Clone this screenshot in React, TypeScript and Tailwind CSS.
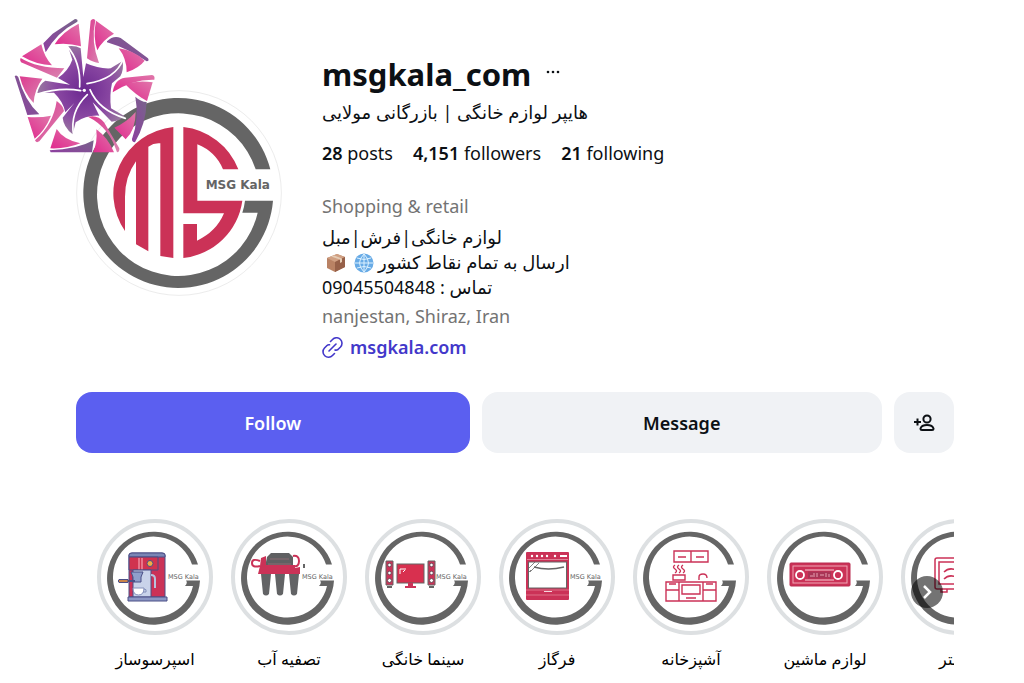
import type { ReactNode } from "react";

const RED = "#cb3257";
const GREY = "#656565";

type Highlight = {
  title: string;
  branded: boolean;
  art: ReactNode;
};

function EspressoArt() {
  return (
    <g stroke="#4b4f86" strokeWidth="1">
      <path d="M32 36 Q32 34 35 34 H65 Q68 34 68 36 V78 H32Z" fill={RED} />
      <path d="M32 36 Q32 34 35 34 H65 Q68 34 68 36 V38 H32Z" fill="#7b86b5" />
      <path d="M32 38 H61 V51 H32Z" fill="#d0334f" />
      <path d="M42 39 V50.500 M45 39 V50.500" stroke="#ef8c9e" strokeWidth="1.500" />
      <circle cx="53" cy="44.500" r="3" fill="#f0ad45" />
      <path d="M36 51 H54 V78 H36Z" fill="#c9d3ea" />
      <path d="M34 53 H46 L44 58 V63 H36 V58Z" fill="#8f9fca" />
      <path d="M22 60.500 h9 v3 h-9 q-1.500 -1.500 0 -3Z" fill="#c98349" />
      <path d="M31 62 H38" strokeWidth="2" />
      <path d="M54 56 q4 0 4 4 v9" fill="none" stroke="#b7c2dd" strokeWidth="2" />
      <path d="M36 69 H47 Q47 76 41.500 76 Q36 76 36 69Z" fill="#fff" stroke="#8490ba" />
      <path d="M47 70 q3 0 2 3 h-3" fill="none" stroke="#8490ba" />
      <path d="M31 78 H70 V82 H31Z" fill="#8c97c4" />
    </g>
  );
}

function WaterFilterArt() {
  return (
    <g>
      <path d="M36 38 L40 34 H58 L62 38 V48 H34Z" fill="#5f6062" />
      <path d="M39 40 H58 M37 45 H60" stroke="#8c6a72" strokeWidth="1" />
      <path d="M29 42 q-8 -3 -8 2 q0 5 8 3 M62 37 q6 -1 6 5 q0 6 -5 5" fill="none" stroke={RED} strokeWidth="2" />
      <path d="M30 39 L35 37 V46 H64 V49 L69 48 V55 H27 L29 47Z" fill={RED} />
      <path d="M30 55 h10 l-2 20 q-3 3 -6 0Z M44 55 h10 l-2 20 q-3 3 -6 0Z M58 55 h10 l-2 20 q-3 3 -6 0Z" fill="#626365" />
      <path d="M73 45 v4" stroke={GREY} strokeWidth="2" />
    </g>
  );
}

function Speaker({ x }: { x: number }) {
  return (
    <g transform={`translate(${x} 0)`}>
      <path d="M0 42 H7 V66 H0Z" fill={RED} stroke={GREY} />
      <g fill="#fff" stroke="#6d4b58">
        <circle cx="3.500" cy="46" r="1.800" />
        <circle cx="3.500" cy="54" r="1.800" />
        <circle cx="3.500" cy="61.500" r="2" />
      </g>
      <path d="M1 68 H6" stroke={GREY} strokeWidth="2" />
    </g>
  );
}

function CinemaArt() {
  return (
    <g>
      <Speaker x={21} />
      <Speaker x={63} />
      <rect x="32" y="45" width="27" height="19" fill="#d8304f" stroke={GREY} />
      <path d="M35 55 V50 H41 M38 53 l2 -2" stroke="#fff" fill="none" />
      <path d="M43 64 H48 V67 H51 V69 H40 V67 H43Z" fill={RED} />
    </g>
  );
}

function OvenArt() {
  return (
    <g>
      <rect x="27" y="33" width="43" height="48" rx="1" fill={RED} />
      <g fill="#fff">
        <circle cx="33" cy="37" r="1.200" />
        <circle cx="38" cy="37" r="1.200" />
        <circle cx="43" cy="37" r="1.200" />
        <circle cx="48" cy="37" r="1.200" />
        <circle cx="56" cy="37" r="1.200" />
        <rect x="61" y="36" width="7" height="2" />
      </g>
      <path d="M28 40.500 H69" stroke="#e9a0b0" strokeWidth="0.700" />
      <rect x="29.500" y="43" width="38" height="26" fill="#fff" stroke={GREY} />
      <path d="M35 48 Q49 52 65 48" fill="none" stroke={GREY} strokeWidth="1.500" />
      <path d="M29 50 l7 -7 M31 53 l9 -9 M29 54 l3 -3" stroke={GREY} strokeWidth="0.800" />
      <path d="M27 71 H70 M27 76 H70" stroke="#e88a9f" strokeWidth="0.700" />
      <path d="M45 72.500 h8" stroke="#fff" strokeWidth="0.800" />
    </g>
  );
}

function KitchenArt() {
  return (
    <g fill="none" stroke={RED} strokeWidth="1.400">
      <path d="M41 32 H75 V43 H41Z M58 32 V43 M45 38 H53 M63 38 H71" />
      <path d="M42 46 q-3 2 0 4 t0 4 M46 46 q-3 2 0 4 t0 4 M50 46 q-3 2 0 4 t0 4" />
      <path d="M40 56 H52 V61 H40Z M66 61 V58 Q66 55 70 55 Q74 55 74 59" />
      <path d="M33 63 H83 V82 H33Z M46 63 V82 M70 63 V82 M33 71 H46 M70 71 H83 M49 66 H67 V75 H49Z M53 79 H63 M36 65 H43 M73 65 H80" />
    </g>
  );
}

function CarAudioArt() {
  return (
    <g>
      <rect x="23" y="44" width="60" height="23" rx="1" fill={RED} stroke="#b92c50" />
      <rect x="26" y="47" width="54" height="17" fill="none" stroke="#f0a7b6" />
      <path d="M38 51 H67 M38 61 H67" stroke="#f7cbd4" />
      <rect x="41" y="52.500" width="23" height="7" fill="#a93556" />
      <circle cx="33" cy="56" r="4" fill={RED} stroke="#fff" strokeWidth="1.800" />
      <circle cx="71" cy="56" r="4" fill={RED} stroke="#fff" strokeWidth="1.800" />
      <path d="M43 57 h3 M47 54 v4 M50 54 v4 M53 56 h4 M59 54 v4 M62 55 v3" stroke="#e6a3b2" />
    </g>
  );
}

function ToasterArt() {
  return (
    <g fill="none" stroke={RED} strokeWidth="1.500">
      <rect x="34" y="39" width="46" height="31" rx="2" />
      <rect x="38" y="43" width="34" height="22" />
      <path d="M43 53 q5 -5 12 -2 M43 60 q5 -5 12 -2 M40 70 v3 h6 v-3" />
    </g>
  );
}

const highlights: Highlight[] = [
  { title: "اسپرسوساز", branded: true, art: <EspressoArt /> },
  { title: "تصفیه آب", branded: true, art: <WaterFilterArt /> },
  { title: "سینما خانگی", branded: true, art: <CinemaArt /> },
  { title: "فرگاز", branded: true, art: <OvenArt /> },
  { title: "آشپزخانه", branded: false, art: <KitchenArt /> },
  { title: "لوازم ماشین", branded: false, art: <CarAudioArt /> },
  { title: "توستر", branded: false, art: <ToasterArt /> },
];

function HighlightCover({ branded, art }: { branded: boolean; art: ReactNode }) {
  return (
    <svg viewBox="0 0 116 116" className="h-[116px] w-[116px]" aria-hidden="true">
      <circle cx="58" cy="58" r="56" fill="#fff" stroke="#dde0e2" strokeWidth="4" />
      <path
        d="M101 45.500 A46.500 46.500 0 1 0 103 61.500 H89 Q91 64 88 67 H96 A40.500 40.500 0 1 1 95 45.500Z"
        fill={GREY}
      />
      {art}
      {branded && (
        <text x="71" y="60" fontSize="6.500" fill={GREY} fontFamily="DejaVu Sans">
          MSG Kala
        </text>
      )}
    </svg>
  );
}

function ProfileLogo() {
  return (
    <svg viewBox="231 270 618 618" className="h-[206px] w-[206px]" role="img" aria-label="MSG Kala">
      <circle cx="540" cy="579" r="307" fill="#fff" stroke="#ececec" strokeWidth="3" />
      <path
        d="M814 508 A285 285 0 1 0 822 602 H738 Q736 620 730 638 H776 A244 244 0 1 1 770 508Z"
        fill={GREY}
      />
      <path
        d="M523 381 A200 200 0 0 0 378 693 V590 Q378 530 411 484 V733 L448 754 V440 Q465 428 484 430 V768 L523 774Z"
        fill={RED}
      />
      <path
        d="M553 381 A200 200 0 0 1 718 508 H672 Q650 455 595 433 V602 H730 A200 200 0 0 1 553 774 V672 H594 V722 Q652 695 675 640 H553Z"
        fill={RED}
      />
      <text x="620" y="566" fontSize="36" fill={GREY} fontFamily="DejaVu Sans" fontWeight="700">
        MSG Kala
      </text>
    </svg>
  );
}

// five-sided pinwheel, each lobe built from its own curved blades
function PinwheelLogo() {
  return (
    <svg viewBox="0 0 450 435" className="h-[145px] w-[150px]" aria-hidden="true">
      <defs>
        <linearGradient id="pink" x1="0" y1="1" x2="1" y2="0">
          <stop offset="0" stopColor="#e02a8e" />
          <stop offset="1" stopColor="#e077aa" />
        </linearGradient>
        <linearGradient id="rose" x1="0" y1="0" x2="1" y2="1">
          <stop offset="0" stopColor="#dd3a8f" />
          <stop offset="1" stopColor="#d985b1" />
        </linearGradient>
        <linearGradient id="violet" x1="0" y1="1" x2="1" y2="0">
          <stop offset="0" stopColor="#8e3fa0" />
          <stop offset="1" stopColor="#77658a" />
        </linearGradient>
        <radialGradient id="core" gradientUnits="userSpaceOnUse" cx="222" cy="225" r="140">
          <stop offset="0" stopColor="#6b2890" />
          <stop offset="0.600" stopColor="#8a48a2" />
          <stop offset="1" stopColor="#98789f" />
        </radialGradient>
      </defs>

      <path
        d="M174 94 Q195 91 212 100 L220 186 L228 145 Q266 162 302 160 L338 138 Q342 165 331 184 L306 205 Q298 240 303 280 L344 304 Q330 319 305 320 L248 262 L268 302 Q228 300 197 322 L188 358 Q160 335 158 308 L193 264 L166 292 Q160 260 132 233 L82 234 Q88 206 106 197 L180 209 L144 189 Q176 166 187 134Z"
        fill="url(#core)"
      />
      <g fill="none" stroke="#fff" strokeWidth="5" strokeLinecap="round">
        <path d="M170 92 Q213 140 209 216" />
        <path d="M340 132 Q318 192 231 206" />
        <path d="M346 310 Q266 286 240 224" />
        <path d="M191 362 Q178 290 232 239" />
        <path d="M80 238 Q150 216 212 227" />
      </g>
      <circle cx="223" cy="226" r="5" fill="#fff" />

      <g fill="url(#violet)">
        <path d="M100 85 L128 56 L195 12 Q205 12 202 20 Q140 52 107 112Z" />
        <path d="M291 79 Q310 60 332 69 L414 130 Q419 139 410 139 Q350 99 291 82Z" />
        <path d="M14 183 Q20 178 25 187 Q44 258 88 298 L52 300Z" />
        <path d="M119 406 Q200 404 251 376 L246 412 H122Z" />
        <path d="M376 245 Q392 260 410 261 Q408 325 375 382 Q365 381 366 372 Q388 310 376 245Z" />
      </g>

      <g fill="url(#pink)">
        <path d="M36 124 L94 88 Q102 125 126 151 Q80 150 36 124Z" />
        <path d="M134 88 Q155 52 206 26 L213 94 Q172 82 134 88Z" />
        <path d="M258 17 L312 56 Q277 75 262 106 Q248 66 258 17Z" />
        <path d="M326 100 Q372 106 404 137 Q388 158 350 172 Q350 130 326 100Z" />
        <path d="M308 232 Q314 192 345 188 L426 180 Q436 182 433 194 Q368 192 308 232Z" />
        <path d="M345 207 Q385 195 428 202 L411 258 Q377 240 345 207Z" />
        <path d="M53 306 Q90 309 123 302 Q106 345 74 371Z" />
        <path d="M140 342 Q160 374 211 385 Q170 402 121 400Z" />
        <path d="M259 343 Q294 368 312 412 H249 Q263 385 259 343Z" />
        <path d="M313 338 Q350 322 377 291 Q377 345 347 373Z" />
      </g>

      <g fill="url(#rose)">
        <path d="M32 129 Q80 159 163 160 L141 188 L33 142 Q28 135 32 129Z" />
        <path d="M242 17 Q249 7 256 16 Q242 80 267 144 Q250 143 231 130Z" />
        <path d="M29 184 L97 191 Q73 224 71 264 Q41 234 29 184Z" />
        <path d="M140 258 Q160 272 162 288 L88 379 Q78 385 75 376 Q130 328 140 258Z" />
        <path d="M234 305 Q264 298 282 322 L328 400 Q329 412 321 412 Q298 337 234 305Z" />
      </g>
    </svg>
  );
}

function Globe() {
  return (
    <svg viewBox="0 0 20 20" className="mx-1 inline h-5 w-5 align-[-4px]" role="img" aria-label="globe">
      <circle cx="10" cy="10" r="9.500" fill="#68abe6" />
      <path
        d="M10 1 V19 M1 10 H19 M3 5 Q10 8 17 5 M3 15 Q10 12 17 15 M10 1 Q1 10 10 19 M10 1 Q19 10 10 19"
        fill="none"
        stroke="#dcf1ff"
        strokeWidth="1"
      />
    </svg>
  );
}

function Parcel() {
  return (
    <svg viewBox="0 0 20 20" className="mx-1 inline h-5 w-5 align-[-4px]" role="img" aria-label="package">
      <path d="M1 5 L11 1 L19 4 V14 L9 19 L1 15Z" fill="#b98264" />
      <path d="M1 5 L11 1 L19 4 L9 9Z" fill="#d0a083" />
      <path d="M9 9 L19 4 V14 L9 19Z" fill="#966048" />
      <path d="M5 3.500 L14 6.500 V10 L16 9 V5.500 L8 2.500Z" fill="#e5ccb5" />
    </svg>
  );
}

function LinkIcon() {
  return (
    <svg viewBox="0 0 22 22" className="h-[22px] w-[22px]" fill="none" stroke="currentColor" strokeWidth="1.600" strokeLinecap="round" aria-hidden="true">
      <path d="M7 14 L14 7" />
      <path d="M8.500 4.500 L10.500 2.500 A5.200 5.200 0 0 1 18.500 10 L16 12.500 Q14.500 13.500 13 13" />
      <path d="M12.500 16.500 L10.500 18.500 A5.200 5.200 0 0 1 2.500 11 L5 8.500 Q6 7.500 7.500 7.800" />
    </svg>
  );
}

function AddPersonIcon() {
  return (
    <svg viewBox="0 0 22 20" className="h-5 w-[22px]" fill="none" stroke="currentColor" strokeWidth="2" aria-hidden="true">
      <path d="M1 9 H8 M4.500 5.500 V12.500" />
      <circle cx="14" cy="6" r="3.600" />
      <path d="M7.500 15.500 Q8.500 12 14 12 Q19.500 12 20.500 15.500 Q20.500 17 19 17 H9 Q7.500 17 7.500 15.500Z" />
    </svg>
  );
}

export default function App() {
  return (
    <main className="min-h-screen overflow-hidden bg-white pr-[70px] pl-[76px] font-['Noto_Sans','DejaVu_Sans',sans-serif] text-[#0c1014]">
      <header className="relative flex gap-10 pt-[54px]">
        <div className="mt-9 shrink-0">
          <ProfileLogo />
        </div>
        <div className="absolute top-[15px] -left-[66px]">
          <PinwheelLogo />
        </div>

        <div className="text-[18px] leading-[25px]">
          <div className="flex items-center gap-3.5">
            <h1 className="text-[31px] leading-10 font-bold">msgkala_com</h1>
            <button type="button" aria-label="More options">
              <svg viewBox="0 0 16 12" className="h-3 w-4" fill="currentColor">
                <circle cx="3" cy="4" r="1.300" />
                <circle cx="8" cy="4" r="1.300" />
                <circle cx="13" cy="4" r="1.300" />
              </svg>
            </button>
          </div>
          <p dir="rtl" className="mt-1.5 w-fit">
            هایپر لوازم خانگی | بازرگانی مولایی
          </p>
          <ul className="mt-4 flex gap-5">
            <li><span className="font-semibold">28</span> posts</li>
            <li><span className="font-semibold">4,151</span> followers</li>
            <li><span className="font-semibold">21</span> following</li>
          </ul>

          <p className="mt-7 text-[#737373]">Shopping &amp; retail</p>
          <div className="mt-1.5">
            <p dir="rtl" className="w-fit">لوازم خانگی|فرش|مبل</p>
            <p dir="rtl" className="w-fit">
              ارسال به تمام نقاط کشور<Globe /><Parcel />
            </p>
            <p dir="rtl" className="w-fit">تماس : 09045504848</p>
          </div>
          <p className="mt-1 text-[#737373]">nanjestan, Shiraz, Iran</p>
          <a href="#site" className="mt-1.5 flex w-fit items-center gap-1.5 font-semibold text-[#4338ca]">
            <LinkIcon />
            msgkala.com
          </a>
        </div>
      </header>

      <div className="mt-8 flex h-[61px] gap-3 text-[18px] font-semibold">
        <button type="button" className="flex-[394] rounded-2xl bg-[#5b5ff0] pt-0.5 text-white">Follow</button>
        <button type="button" className="flex-[401] rounded-2xl bg-[#f0f2f5] pt-0.5">Message</button>
        <button type="button" aria-label="Similar accounts" className="grid w-[60px] place-items-center rounded-2xl bg-[#f0f2f5]">
          <AddPersonIcon />
        </button>
      </div>

      <section className="relative mt-[66px] overflow-hidden pl-[21px]">
        <ul className="flex gap-[18px]">
          {highlights.map((item) => (
            <li key={item.title} className="w-[116px] shrink-0 text-center">
              <HighlightCover branded={item.branded} art={item.art} />
              <p dir="rtl" className="mt-3 text-[16px] leading-6 whitespace-nowrap text-black">{item.title}</p>
            </li>
          ))}
        </ul>
        <button
          type="button"
          aria-label="Next"
          className="absolute top-[57px] right-[11px] grid h-8 w-8 place-items-center rounded-full bg-black/55 text-white"
        >
          <svg viewBox="0 0 16 16" className="h-4 w-4" fill="none" stroke="currentColor" strokeWidth="2.500">
            <path d="M5 2 L11 8 L5 14" />
          </svg>
        </button>
      </section>
    </main>
  );
}
